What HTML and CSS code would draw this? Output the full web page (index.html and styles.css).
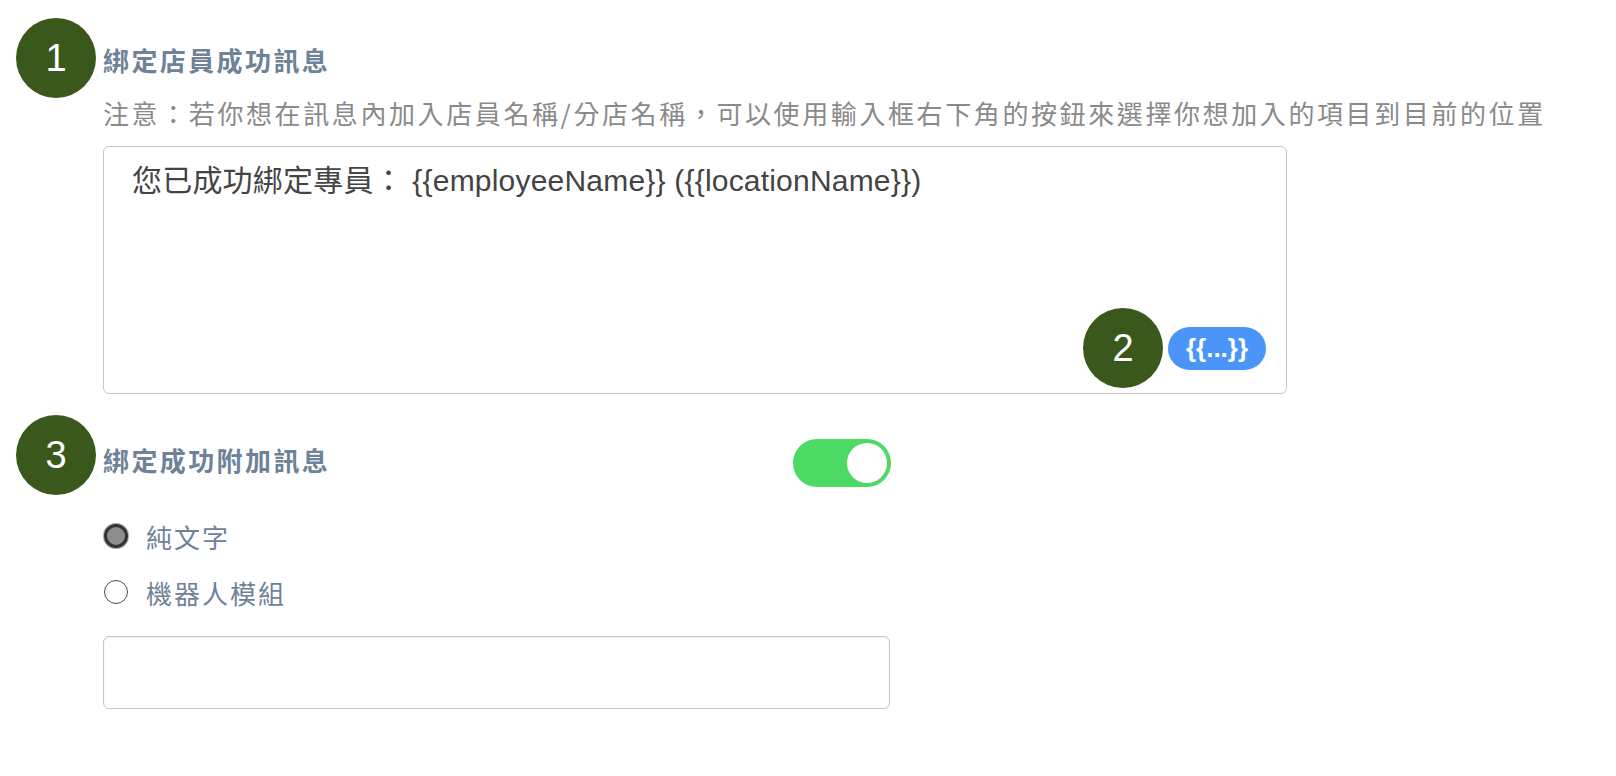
FILE: index.html
```html
<!DOCTYPE html>
<html lang="zh-Hant">
<head>
<meta charset="utf-8">
<title>綁定店員成功訊息</title>
<link rel="stylesheet" href="styles.css">
</head>
<body>
<div class="page">
  <section class="field">
    <div class="step">1</div>
    <div class="field-body">
      <div class="field-title">綁定店員成功訊息</div>
      <div class="hint">注意：若你想在訊息內加入店員名稱/分店名稱，可以使用輸入框右下角的按鈕來選擇你想加入的項目到目前的位置</div>
      <div class="editor">
        <textarea class="editor-input">您已成功綁定專員： {{employeeName}} ({{locationName}})</textarea>
        <div class="editor-tools">
          <div class="step">2</div>
          <button class="var-btn" type="button">{{...}}</button>
        </div>
      </div>
    </div>
  </section>

  <section class="field field-extra">
    <div class="step">3</div>
    <div class="field-body field-body-narrow">
      <div class="title-row">
        <div class="field-title">綁定成功附加訊息</div>
        <span class="toggle"><span class="knob"></span></span>
      </div>
      <div class="radio-list">
        <label class="radio-row"><input class="radio" type="radio" name="kind" checked>純文字</label>
        <label class="radio-row"><input class="radio" type="radio" name="kind">機器人模組</label>
      </div>
      <input class="text-input" type="text">
    </div>
  </section>
</div>
</body>
</html>
```

FILE: styles.css
```css
* { box-sizing: border-box; }

html, body {
  margin: 0;
  padding: 0;
  background: #ffffff;
}

body {
  font-family: "Liberation Sans", "Noto Sans CJK TC", sans-serif;
  color: #444444;
}

.page {
  padding: 18px 0 0 16px;
}

.field {
  display: flex;
  align-items: flex-start;
}

.field-extra {
  margin-top: 21px;
}

.step {
  flex: 0 0 80px;
  width: 80px;
  height: 80px;
  border-radius: 50%;
  background: #3a581b;
  color: #ffffff;
  font-family: "Liberation Sans", sans-serif;
  font-size: 38px;
  display: flex;
  align-items: center;
  justify-content: center;
}

.field-body {
  margin-left: 7px;
  display: flex;
  flex-direction: column;
}

.field-title {
  font-family: "Noto Sans CJK TC", sans-serif;
  font-size: 26px;
  font-weight: 700;
  letter-spacing: 2.4px;
  line-height: 40px;
  color: #6e8298;
  margin-top: 22px;
}

.hint {
  font-family: "Noto Sans CJK TC", sans-serif;
  font-size: 26px;
  letter-spacing: 2.6px;
  line-height: 40px;
  color: #8a8a8a;
  margin-top: 13px;
  white-space: nowrap;
}

.editor {
  position: relative;
  margin-top: 13px;
  width: 1184px;
  height: 248px;
  border: 1px solid #c6c6c6;
  border-radius: 6px;
  background: #ffffff;
}

.editor-input {
  display: block;
  width: 100%;
  height: 100%;
  border: none;
  outline: none;
  resize: none;
  background: transparent;
  padding: 14px 28px;
  font-family: "Liberation Sans", "Noto Sans CJK TC", sans-serif;
  font-size: 30px;
  letter-spacing: 0.2px;
  line-height: 40px;
  color: #444444;
  border-radius: 6px;
}

.editor-tools {
  position: absolute;
  right: 20px;
  bottom: 5px;
  display: flex;
  align-items: center;
  gap: 5px;
}

.var-btn {
  width: 98px;
  height: 43px;
  border: none;
  border-radius: 22px;
  background: #4b95f8;
  color: #ffffff;
  font-family: "Liberation Sans", sans-serif;
  font-size: 26px;
  font-weight: 700;
  padding: 0;
  cursor: pointer;
}

.field-body-narrow {
  width: 788px;
}

.title-row {
  display: flex;
  align-items: center;
  justify-content: space-between;
  height: 48px;
  margin-top: 24px;
}

.title-row .field-title {
  margin-top: -6px;
}

.toggle {
  position: relative;
  width: 98px;
  height: 48px;
  border-radius: 24px;
  background: #4cd964;
}

.knob {
  position: absolute;
  top: 4px;
  right: 4px;
  width: 40px;
  height: 40px;
  border-radius: 50%;
  background: #ffffff;
}

.radio-list {
  display: flex;
  flex-direction: column;
  gap: 16px;
  margin-top: 29px;
}

.radio-row {
  display: flex;
  align-items: center;
  height: 40px;
  font-family: "Noto Sans CJK TC", sans-serif;
  font-size: 26px;
  letter-spacing: 2px;
  color: #6e8298;
}

.radio {
  appearance: none;
  -webkit-appearance: none;
  margin: 0 18px 0 1px;
  width: 24px;
  height: 24px;
  border-radius: 50%;
  border: 1.5px solid #4a4a4a;
  background: #ffffff;
}

.radio:checked {
  border: 3px solid #343434;
  background: #8d8d8d;
  box-shadow: 0 0 0 1px #a4a4a4;
}

.text-input {
  margin-top: 24px;
  width: 787px;
  height: 73px;
  border: 1px solid #c6c6c6;
  border-radius: 6px;
  box-shadow: inset 0 1px 2px rgba(0, 0, 0, 0.08);
  background: #ffffff;
  font-size: 24px;
  padding: 0 16px;
  outline: none;
}
```
